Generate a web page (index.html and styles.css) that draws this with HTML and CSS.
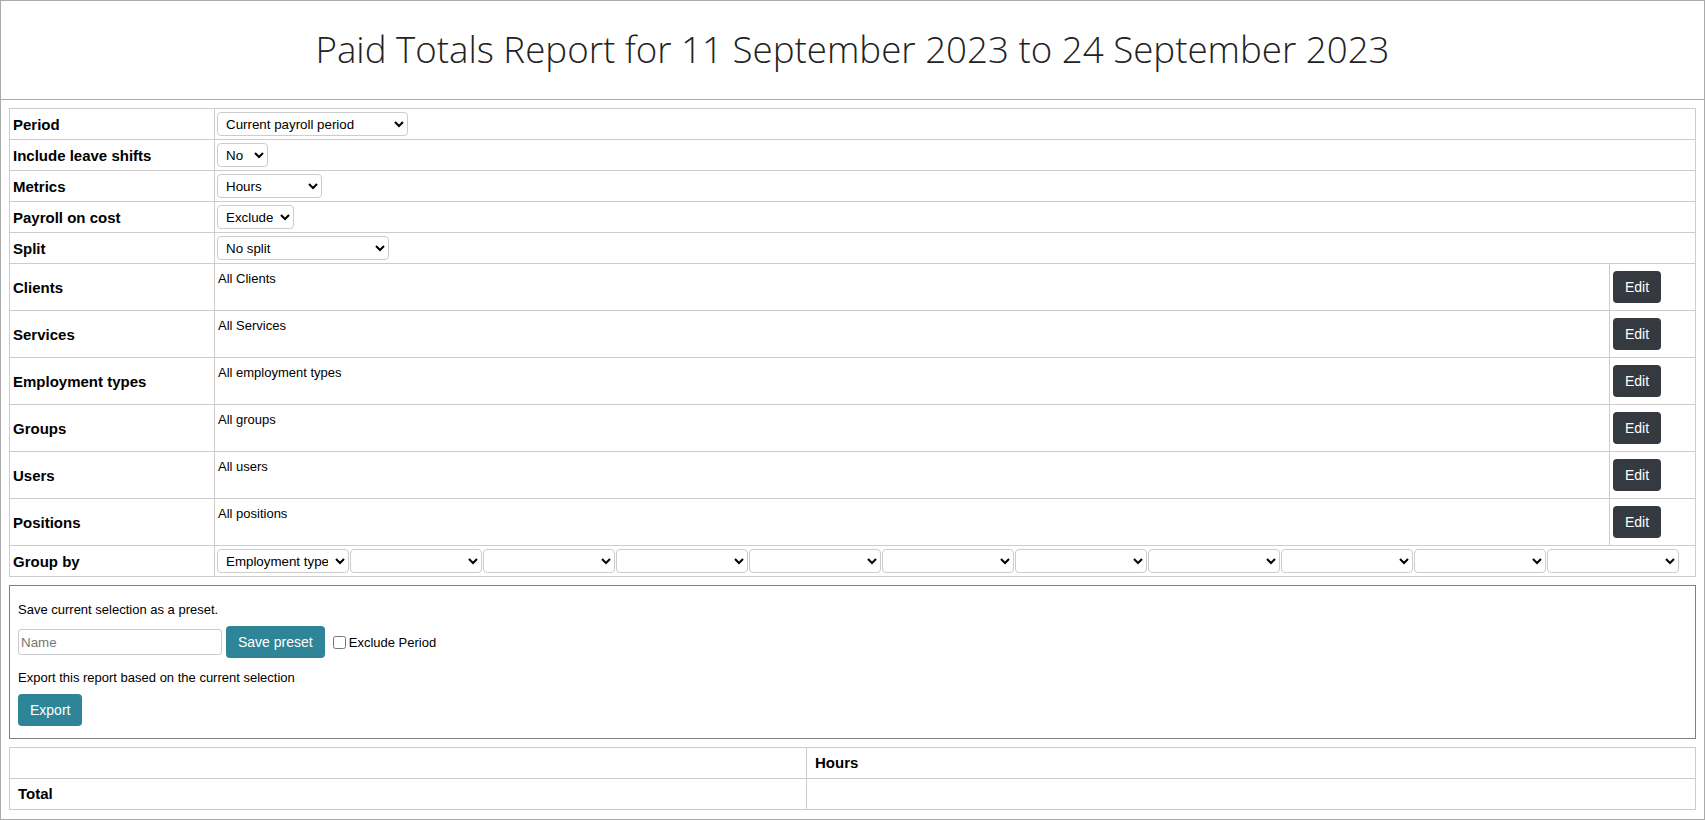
FILE: index.html
```html
<!DOCTYPE html>
<html lang="en">
<head>
    <meta charset="UTF-8">
    <meta name="viewport" content="width=device-width, initial-scale=1.0">
    <title>Paid Totals Report</title>
    <link rel="stylesheet" href="styles.css">
</head>
<body>
    <div class="report">
        <header class="report-header">
            <h1>Paid Totals Report for 11 September 2023 to 24 September 2023</h1>
        </header>

        <table class="filters">
            <colgroup>
                <col class="col-label">
                <col>
                <col class="col-edit">
            </colgroup>
            <tr>
                <th>Period</th>
                <td colspan="2">
                    <select class="sel sel-period"><option>Current payroll period</option></select>
                </td>
            </tr>
            <tr>
                <th>Include leave shifts</th>
                <td colspan="2">
                    <select class="sel sel-leave"><option>No</option></select>
                </td>
            </tr>
            <tr>
                <th>Metrics</th>
                <td colspan="2">
                    <select class="sel sel-metrics"><option>Hours</option></select>
                </td>
            </tr>
            <tr>
                <th>Payroll on cost</th>
                <td colspan="2">
                    <select class="sel sel-oncost"><option>Exclude</option></select>
                </td>
            </tr>
            <tr>
                <th>Split</th>
                <td colspan="2">
                    <select class="sel sel-split"><option>No split</option></select>
                </td>
            </tr>
            <tr class="pick-row">
                <th>Clients</th>
                <td class="summary">All Clients</td>
                <td class="edit-cell"><button class="btn btn-dark">Edit</button></td>
            </tr>
            <tr class="pick-row">
                <th>Services</th>
                <td class="summary">All Services</td>
                <td class="edit-cell"><button class="btn btn-dark">Edit</button></td>
            </tr>
            <tr class="pick-row">
                <th>Employment types</th>
                <td class="summary">All employment types</td>
                <td class="edit-cell"><button class="btn btn-dark">Edit</button></td>
            </tr>
            <tr class="pick-row">
                <th>Groups</th>
                <td class="summary">All groups</td>
                <td class="edit-cell"><button class="btn btn-dark">Edit</button></td>
            </tr>
            <tr class="pick-row">
                <th>Users</th>
                <td class="summary">All users</td>
                <td class="edit-cell"><button class="btn btn-dark">Edit</button></td>
            </tr>
            <tr class="pick-row">
                <th>Positions</th>
                <td class="summary">All positions</td>
                <td class="edit-cell"><button class="btn btn-dark">Edit</button></td>
            </tr>
            <tr>
                <th>Group by</th>
                <td colspan="2">
                    <div class="group-by">
                        <select class="sel sel-group"><option>Employment type</option></select>
                        <select class="sel sel-group"><option></option></select>
                        <select class="sel sel-group"><option></option></select>
                        <select class="sel sel-group"><option></option></select>
                        <select class="sel sel-group"><option></option></select>
                        <select class="sel sel-group"><option></option></select>
                        <select class="sel sel-group"><option></option></select>
                        <select class="sel sel-group"><option></option></select>
                        <select class="sel sel-group"><option></option></select>
                        <select class="sel sel-group"><option></option></select>
                        <select class="sel sel-group"><option></option></select>
                    </div>
                </td>
            </tr>
        </table>

        <div class="preset-box">
            <p>Save current selection as a preset.</p>
            <div class="preset-form">
                <input type="text" class="name-input" placeholder="Name">
                <button class="btn btn-teal">Save preset</button>
                <label class="check-label"><input type="checkbox">Exclude Period</label>
            </div>
            <p>Export this report based on the current selection</p>
            <button class="btn btn-teal">Export</button>
        </div>

        <table class="totals">
            <colgroup>
                <col class="col-name">
                <col>
            </colgroup>
            <tr>
                <th></th>
                <th>Hours</th>
            </tr>
            <tr>
                <th>Total</th>
                <td></td>
            </tr>
        </table>
    </div>
</body>
</html>
```

FILE: styles.css
```css
* {
    box-sizing: border-box;
}

body {
    margin: 0;
    font-family: "Liberation Sans", Arial, sans-serif;
    font-size: 13px;
    color: #000;
    background: #fff;
}

.report {
    min-height: 100vh;
    border: 1px solid #aaa;
}

/* titre */
.report-header {
    height: 99px;
    border-bottom: 1px solid #aaa;
    display: flex;
    align-items: center;
    justify-content: center;
}

.report-header h1 {
    margin: 0;
    padding-bottom: 2px;
    font-family: "Open Sans", sans-serif;
    font-weight: 300;
    font-size: 36.7px;
    color: #222;
}

/* filtres */
.filters {
    width: calc(100% - 16px);
    margin: 8px 8px 0;
    border-collapse: collapse;
    table-layout: fixed;
}

.filters .col-label {
    width: 205px;
}

.filters .col-edit {
    width: 86px;
}

.filters th,
.filters td {
    border: 1px solid #ccc;
    padding: 3px 2px;
    vertical-align: middle;
}

.filters th {
    text-align: left;
    font-size: 15px;
    padding-left: 3px;
}

.filters .summary {
    vertical-align: top;
    padding: 7px 3px;
    line-height: 15px;
}

.filters .edit-cell {
    padding: 7px 3px;
}

.sel {
    height: 24px;
    font-family: "Liberation Sans", Arial, sans-serif;
    font-size: 13.33px;
    color: #000;
    background: #fff;
    border: 1px solid #ccc;
    border-radius: 4px;
    padding: 0 4px;
    display: block;
}

.sel-period { width: 191px; }
.sel-leave { width: 51px; }
.sel-metrics { width: 105px; }
.sel-oncost { width: 77px; }
.sel-split { width: 172px; }

.group-by {
    display: flex;
    gap: 1px;
}

.sel-group {
    width: 132px;
    flex: none;
}

/* boutons */
.btn {
    font-family: "Liberation Sans", Arial, sans-serif;
    font-size: 14px;
    line-height: 20px;
    padding: 6px 12px;
    border: none;
    border-radius: 4px;
    color: #fff;
    cursor: pointer;
    display: inline-block;
}

.btn-dark {
    background: #343a40;
}

.btn-teal {
    background: #2e8597;
}

/* preset */
.preset-box {
    margin: 8px 8px 0;
    border: 1px solid #808080;
    padding: 16px 8px 12px;
}

.preset-box p {
    margin: 0;
    line-height: 15px;
}

.preset-form {
    display: flex;
    align-items: center;
    gap: 4px;
    margin: 9px 0 12px;
}

.name-input {
    width: 204px;
    height: 26px;
    border: 1px solid #ccc;
    border-radius: 3px;
    padding: 0 2px;
    font-family: "Liberation Sans", Arial, sans-serif;
    font-size: 13.33px;
}

.name-input::placeholder {
    color: #777;
}

.check-label {
    display: flex;
    align-items: center;
    font-size: 13px;
}

.check-label input {
    width: 13px;
    height: 13px;
    margin: 0 3px 0 4px;
}

.preset-box > p + .btn {
    margin-top: 9px;
}

/* totaux */
.totals {
    width: calc(100% - 16px);
    margin: 8px 8px 8px;
    border-collapse: collapse;
    table-layout: fixed;
}

.totals .col-name {
    width: 797px;
}

.totals th,
.totals td {
    border: 1px solid #ccc;
    padding: 7px 8px;
    line-height: 16px;
    font-size: 15px;
    text-align: left;
}
```
